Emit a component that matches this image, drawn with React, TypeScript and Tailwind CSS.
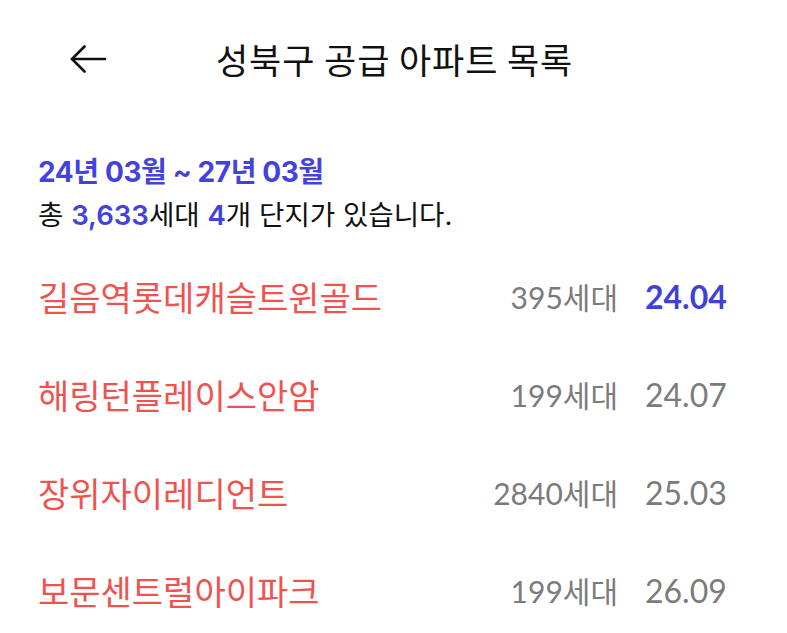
interface Complex {
  name: string;
  units: number;
  date: string;
  highlight?: boolean;
}

const complexes: Complex[] = [
  { name: "길음역롯데캐슬트윈골드", units: 395, date: "24.04", highlight: true },
  { name: "해링턴플레이스안암", units: 199, date: "24.07" },
  { name: "장위자이레디언트", units: 2840, date: "25.03" },
  { name: "보문센트럴아이파크", units: 199, date: "26.09" },
];

export default function App() {
  return (
    <div className="w-[787px] h-[633px] bg-white overflow-hidden font-['Noto_Sans_CJK_KR',sans-serif]">
      {/* Header */}
      <div className="flex items-center h-[118px] pl-[70px]">
        <svg width="37" height="28" viewBox="0 0 37 28" fill="none" stroke="#111" strokeWidth="2.6" strokeLinecap="round" strokeLinejoin="round">
          <path d="M2 14H35" />
          <path d="M14.5 1.5L2 14L14.5 26.5" />
        </svg>
        <h1 className="ml-[109px] text-[35px] text-[#111] tracking-[0.9px] leading-none pb-[2px]">
          성북구 공급 아파트 목록
        </h1>
      </div>

      {/* Summary */}
      <div className="pl-[38px] pt-[39px]">
        <p className="text-[28px] font-bold text-[#4343db] leading-[30px] font-['Inter','Noto_Sans_CJK_KR',sans-serif] tracking-[-0.4px]">
          24년 03월 ~ 27년 03월
        </p>
        <p className="mt-[13px] text-[27.6px] text-[#111] leading-[30px] font-['Inter','Noto_Sans_CJK_KR',sans-serif]">
          총 <span className="text-[#4343db] font-semibold">3,633</span>세대{" "}
          <span className="text-[#4343db] font-semibold">4</span>개 단지가 있습니다.
        </p>
      </div>

      {/* List */}
      <div className="flex flex-col pl-[38px] pr-[60px] mt-[18px]">
        {complexes.map((c) => (
          <div key={c.name} className="flex items-center h-[98px]">
            <span className="flex-1 text-[34px] text-[#ef5350] leading-none">{c.name}</span>
            <span className="text-[30px] text-[#7b7b7b] leading-none font-['Lato','Noto_Sans_CJK_KR',sans-serif]">
              {c.units}세대
            </span>
            <span
              className={
                c.highlight
                  ? "w-[82px] ml-[27px] text-[32px] leading-none font-bold text-[#3f3fd9] font-['Lato',sans-serif]"
                  : "w-[82px] ml-[27px] text-[32px] leading-none text-[#7b7b7b] font-['Lato',sans-serif]"
              }
            >
              {c.date}
            </span>
          </div>
        ))}
      </div>
    </div>
  );
}
